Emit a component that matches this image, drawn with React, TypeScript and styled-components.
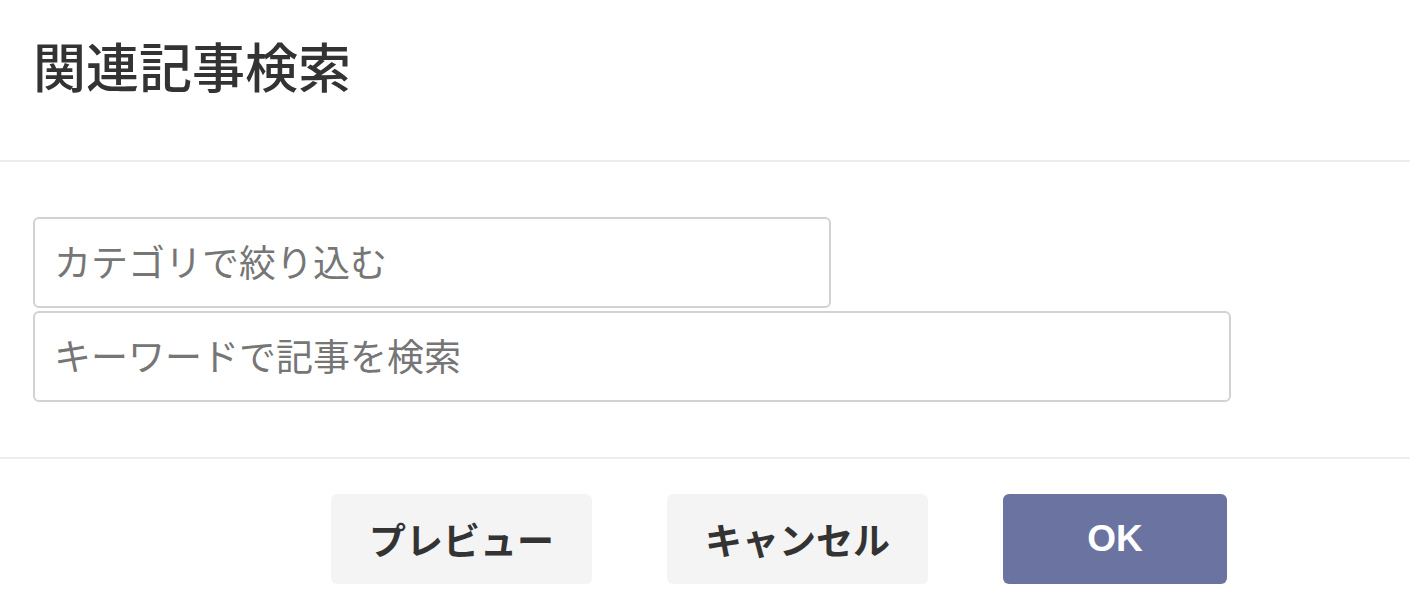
import React from "react";
import styled, { createGlobalStyle } from "styled-components";

const FONT = `"Liberation Sans", "Noto Sans CJK JP", "Noto Sans", sans-serif`;

const Global = createGlobalStyle`
  html, body { margin: 0; padding: 0; background: #ffffff; }
  body { font-family: ${FONT}; }
  * { box-sizing: border-box; }
`;

const Dialog = styled.div`
  width: 1410px;
  background: #ffffff;
  display: flex;
  flex-direction: column;
`;

const Header = styled.header`
  height: 162px;
  padding: 37px 33px 0;
  border-bottom: 2px solid #ececec;
`;

const Title = styled.h1`
  margin: 0;
  font-family: ${FONT};
  font-size: 53px;
  line-height: 66px;
  font-weight: 500;
  color: #333333;
`;

const Body = styled.div`
  padding: 55px 33px;
  display: flex;
  flex-direction: column;
  gap: 3px;
  border-bottom: 2px solid #ececec;
`;

const Field = styled.input<{ $width: number }>`
  width: ${(p) => p.$width}px;
  height: 91px;
  border: 2px solid #d2d2d2;
  border-radius: 6px;
  padding: 4px 19px 0;
  font-family: ${FONT};
  font-size: 37px;
  color: #333333;
  background: #ffffff;
  outline: none;
  &::placeholder {
    color: #767676;
  }
`;

const Footer = styled.footer`
  display: flex;
  justify-content: flex-end;
  gap: 75px;
  padding: 35px 183px 0 0;
`;

const Button = styled.button<{ $primary?: boolean; $width: number }>`
  width: ${(p) => p.$width}px;
  height: 90px;
  border: none;
  border-radius: 6px;
  background: ${(p) => (p.$primary ? "#6b73a1" : "#f4f4f4")};
  color: ${(p) => (p.$primary ? "#ffffff" : "#333333")};
  font-family: ${FONT};
  font-size: 37px;
  font-weight: 700;
  cursor: pointer;
  padding: 0;
`;

export default function App() {
  return (
    <>
      <Global />
      <Dialog>
        <Header>
          <Title>関連記事検索</Title>
        </Header>
        <Body>
          <Field $width={798} placeholder="カテゴリで絞り込む" />
          <Field $width={1198} placeholder="キーワードで記事を検索" />
        </Body>
        <Footer>
          <Button $width={261}>プレビュー</Button>
          <Button $width={261}>キャンセル</Button>
          <Button $width={224} $primary>
            OK
          </Button>
        </Footer>
      </Dialog>
    </>
  );
}
